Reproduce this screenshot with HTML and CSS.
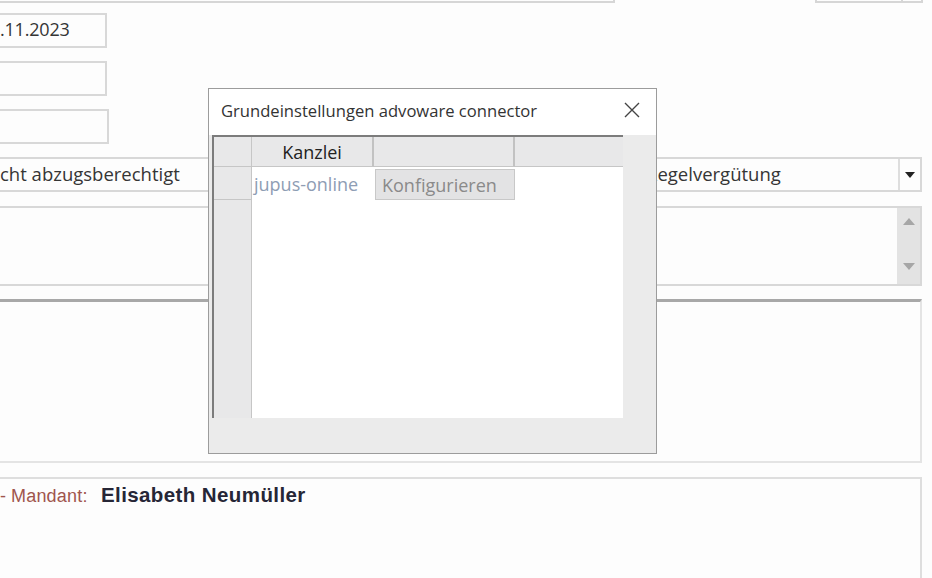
FILE: index.html
```html
<!DOCTYPE html>
<html lang="de">
<head>
<meta charset="utf-8">
<title>Grundeinstellungen advoware connector</title>
<link rel="stylesheet" href="styles.css">
</head>
<body>
<div class="form">
  <div class="top-row">
    <div class="top-box top-left"></div>
    <div class="top-box top-right"><span class="top-drop"></span></div>
  </div>

  <div class="fields">
    <div class="field field-date">.11.2023</div>
    <div class="field"></div>
    <div class="field field-wide"></div>
  </div>

  <div class="combo-row">
    <div class="combo combo-left"><span class="combo-text">cht abzugsberechtigt</span></div>
    <div class="combo combo-right">
      <span class="combo-text">Regelvergütung</span>
      <span class="combo-btn"><svg width="10" height="6" viewBox="0 0 10 6"><path d="M0 0h10L5 6z" fill="#222"/></svg></span>
    </div>
  </div>

  <div class="memo">
    <div class="memo-text"></div>
    <div class="memo-scroll">
      <svg width="12" height="7" viewBox="0 0 12 7"><path d="M0 7L6 0l6 7z" fill="#a6a6a6"/></svg>
      <svg width="12" height="7" viewBox="0 0 12 7"><path d="M0 0h12L6 7z" fill="#a6a6a6"/></svg>
    </div>
  </div>

  <div class="panel"></div>

  <div class="client">
    <span class="client-dash">-</span>
    <span class="client-label">Mandant:</span>
    <span class="client-name">Elisabeth Neumüller</span>
  </div>
</div>

<div class="dialog">
  <div class="dlg-title">
    <span>Grundeinstellungen advoware connector</span>
    <svg class="dlg-close" width="16" height="16" viewBox="0 0 16 16"><path d="M1 1l14 14M15 1L1 15" stroke="#444" stroke-width="1.4" fill="none"/></svg>
  </div>
  <div class="dlg-body">
    <div class="grid">
      <div class="cell rowhead"></div>
      <div class="cell colhead">Kanzlei</div>
      <div class="cell colhead"></div>
      <div class="cell colhead last"></div>

      <div class="cell rowhead"></div>
      <div class="cell data">jupus-online</div>
      <div class="cell data btn-cell"><span class="cfg-btn">Konfigurieren</span></div>
      <div class="cell data"></div>

      <div class="cell rowhead rest"></div>
      <div class="cell empty"></div>
    </div>
  </div>
</div>
</body>
</html>
```

FILE: styles.css
```css
html, body {
  margin: 0;
  width: 932px;
  height: 578px;
  overflow: hidden;
  background: #fdfdfd;
  font-family: "Open Sans", "Noto Sans", sans-serif;
  color: #353535;
}

.form {
  display: flex;
  flex-direction: column;
}

/* bottom edges of the boxes above the visible area */
.top-row {
  display: flex;
  height: 3px;
}
.top-box {
  box-sizing: border-box;
  height: 3px;
  border: 2px solid #d6d6d6;
  border-top: none;
}
.top-left {
  width: 615px;
  border-left: none;
}
.top-right {
  margin-left: 200px;
  width: 108px;
  display: flex;
  justify-content: flex-end;
}
.top-drop {
  width: 18px;
  border-left: 2px solid #d6d6d6;
}

/* text inputs */
.fields {
  display: flex;
  flex-direction: column;
  gap: 13px;
  margin-top: 10px;
}
.field {
  box-sizing: border-box;
  width: 107px;
  height: 35px;
  border: 2px solid #d8d8d8;
  border-left: none;
  display: flex;
  align-items: center;
  font-size: 18px;
  letter-spacing: -0.2px;
  padding-bottom: 3px;
}
.field-wide {
  width: 109px;
}

/* combo boxes */
.combo-row {
  display: flex;
  margin-top: 13px;
  height: 35px;
}
.combo {
  box-sizing: border-box;
  height: 35px;
  border: 2px solid #d8d8d8;
  display: flex;
  align-items: center;
  font-size: 18.5px;
}
.combo-text {
  padding-bottom: 2px;
}
.combo-left {
  width: 420px;
  border-left: none;
}
.combo-right {
  margin-left: 220px;
  width: 282px;
}
.combo-right .combo-text {
  flex: 1;
  padding-left: 4px;
}
.combo-btn {
  width: 20px;
  height: 100%;
  border-left: 2px solid #dedede;
  display: flex;
  align-items: center;
  justify-content: center;
}

/* multi-line text with scrollbar */
.memo {
  box-sizing: border-box;
  margin-top: 14px;
  width: 922px;
  height: 80px;
  border: 2px solid #d8d8d8;
  border-left: none;
  display: flex;
}
.memo-text {
  flex: 1;
}
.memo-scroll {
  width: 23px;
  background: #e3e3e3;
  display: flex;
  flex-direction: column;
  justify-content: space-between;
  align-items: center;
  padding: 10px 0 14px;
  box-sizing: border-box;
}

/* panel with heavy top rule */
.panel {
  box-sizing: border-box;
  margin-top: 13px;
  width: 922px;
  height: 164px;
  border-top: 3px solid #a8a8a8;
  border-right: 2px solid #e4e4e4;
  border-bottom: 2px solid #e4e4e4;
}

/* client box */
.client {
  box-sizing: border-box;
  margin-top: 14px;
  width: 922px;
  height: 110px;
  border: 2px solid #dedede;
  border-left: none;
  border-bottom: none;
  padding-top: 4px;
  font-family: "Liberation Sans", Arial, sans-serif;
  display: flex;
  align-items: baseline;
}
.client-dash {
  color: #a0554d;
  font-size: 18px;
  width: 11px;
}
.client-label {
  color: #a0554d;
  font-size: 18px;
  letter-spacing: 0.2px;
  width: 90px;
}
.client-name {
  font-size: 20.5px;
  font-weight: bold;
  color: #262636;
  letter-spacing: 0.4px;
}

/* dialog */
.dialog {
  position: absolute;
  left: 208px;
  top: 88px;
  width: 449px;
  height: 366px;
  box-sizing: border-box;
  border: 1px solid #9c9c9c;
  background: #ebebeb;
  display: flex;
  flex-direction: column;
}
.dlg-title {
  height: 46px;
  flex: none;
  background: #fff;
  display: flex;
  align-items: center;
  justify-content: space-between;
  padding: 0 16px 4px 12px;
  box-sizing: border-box;
  font-size: 16.6px;
  color: #333;
}
.dlg-body {
  flex: 1;
  padding: 0 33px 35px 3px;
  display: flex;
}
.grid {
  flex: 1;
  border-left: 2px solid #7c7c7c;
  border-top: 2px solid #7c7c7c;
  background: #fff;
  display: grid;
  grid-template-columns: 38px 122px 141px 1fr;
  grid-template-rows: 30px 33px 1fr;
}
.cell {
  box-sizing: border-box;
  font-size: 18px;
  display: flex;
  align-items: center;
}
.rowhead {
  background: #e8e8e9;
  border-right: 1px solid #c6c6c6;
  border-bottom: 1px solid #c6c6c6;
}
.rowhead.rest {
  border-bottom: none;
}
.colhead {
  background: #e8e8e9;
  border-right: 2px solid #c2c2c2;
  border-bottom: 1px solid #c6c6c6;
  justify-content: center;
  color: #222;
}
.colhead.last {
  border-right: none;
}
.data {
  color: #8e9db4;
  padding-left: 2px;
}
.btn-cell {
  padding: 2px 0 0 1px;
  align-items: stretch;
}
.cfg-btn {
  flex: 1;
  box-sizing: border-box;
  background: #e3e3e4;
  border: 1px solid #c8c8c8;
  color: #8a8a8a;
  display: flex;
  align-items: center;
  padding-left: 6px;
}
.empty {
  grid-column: 2 / 5;
  background: #fff;
}
```
